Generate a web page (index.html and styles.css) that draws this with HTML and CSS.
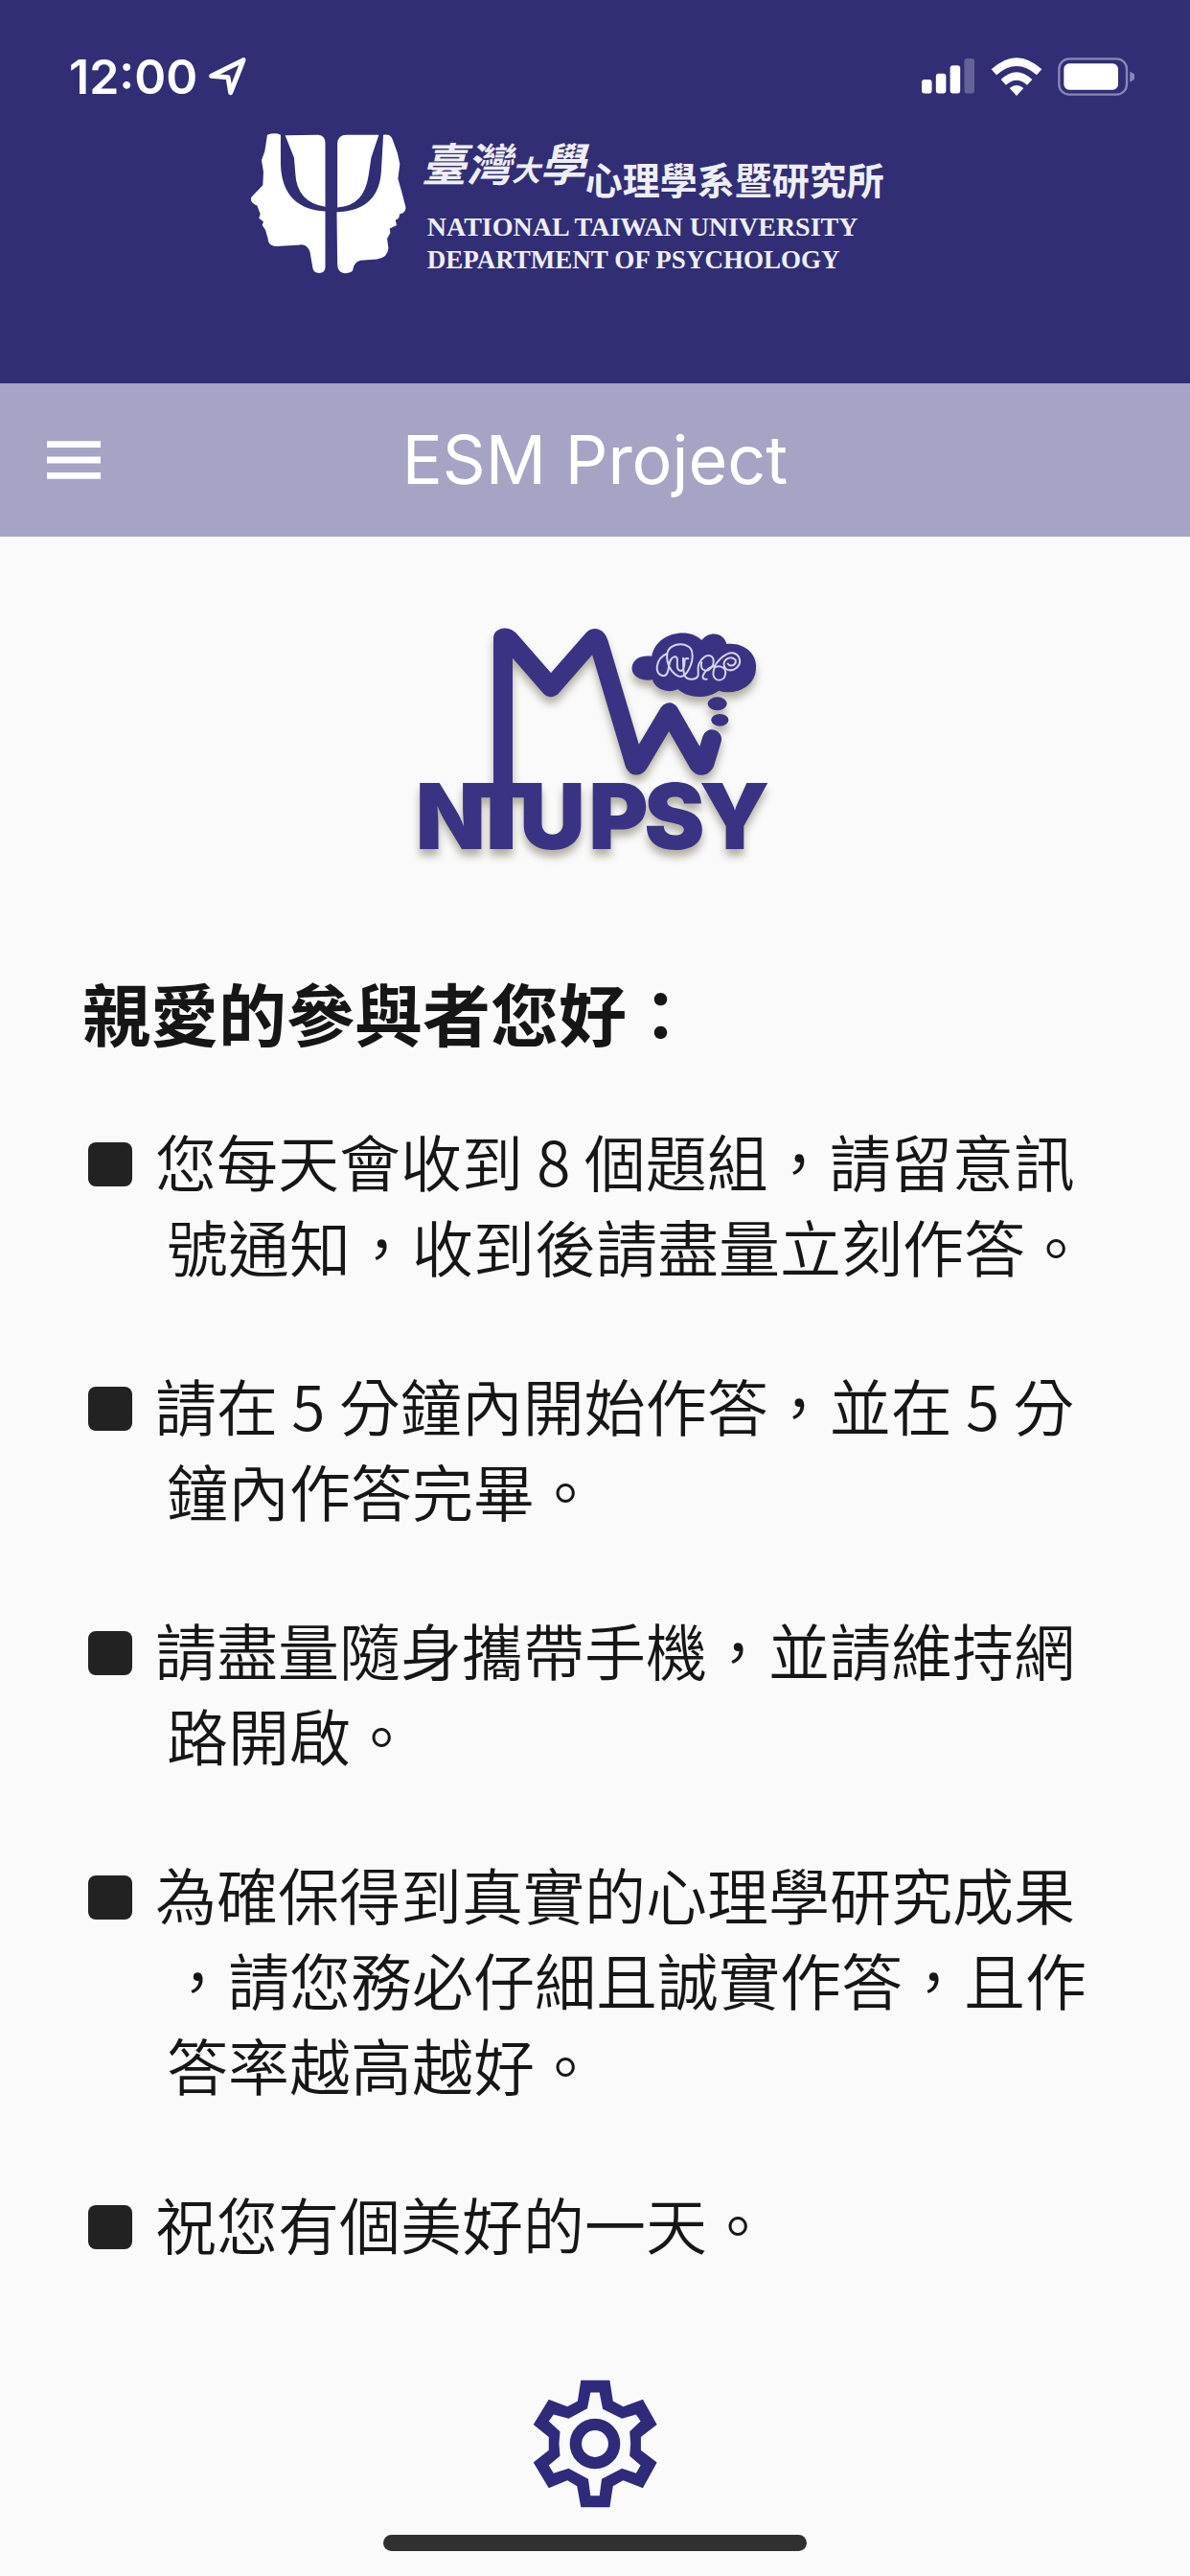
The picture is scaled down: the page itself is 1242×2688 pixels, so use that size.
FILE: index.html
```html
<!DOCTYPE html>
<html lang="zh-Hant">
<head>
<meta charset="utf-8">
<meta name="viewport" content="width=device-width, initial-scale=1">
<title>ESM Project</title>
<link rel="stylesheet" href="styles.css">
</head>
<body>
<header class="header">
  <div class="status">
    <div class="status-left">
      <time class="clock">12:00</time>
      <svg class="locator" viewBox="0 0 120 120" aria-hidden="true"><path d="M8 58 L108 8 L68 110 L60 62 Z"/></svg>
    </div>
    <div class="status-right">
      <svg class="signal" viewBox="0 0 170 120" aria-hidden="true">
        <rect x="0" y="69" width="32" height="44" rx="9"/><rect x="45" y="50" width="32" height="63" rx="9"/>
        <rect x="90" y="24" width="32" height="89" rx="9"/><rect class="faint" x="135" y="2" width="32" height="111" rx="9"/>
      </svg>
      <svg class="wifi" viewBox="0 0 160 120" aria-hidden="true">
        <path d="M1 37 Q80 -36 159 37 L143 55 Q80 -1 17 55 Z"/><path d="M31 69 Q80 22 129 69 L113 86 Q80 56 47 86 Z"/><path d="M58 96 Q80 78 102 96 L80 120 Z"/>
      </svg>
      <svg class="battery" viewBox="0 0 240 120" aria-hidden="true">
        <rect class="shell" x="4" y="4" width="212" height="112" rx="32"/><rect x="19" y="19" width="170" height="82" rx="17"/><path class="tip" d="M226 44 Q242 50 242 60 Q242 70 226 77 Z"/>
      </svg>
    </div>
  </div>
  <div class="brand">
    <svg class="psi" viewBox="0 0 490 440" aria-hidden="true">
      <path d="M54 4 Q78 -4 96 4 L96 96 Q100 236 236 244 L236 420 Q234 438 217 438 Q200 438 197 424 L188 372 Q178 342 150 350 L82 354 Q56 352 56 330 L48 302 L38 288 L42 276 L28 266 L32 252 L22 226 Q-2 216 4 200 L40 162 L42 120 L36 84 L46 56 Z"/>
      <path d="M110 6 L214 4 Q236 6 236 30 L236 230 Q146 216 142 124 L138 76 Z"/>
      <path d="M274 30 Q276 4 302 4 L404 4 L380 76 L372 130 Q358 228 274 232 Z"/>
      <path d="M418 4 Q440 0 446 16 L462 60 L470 96 L464 142 L476 184 L488 230 Q490 248 470 252 L466 266 L456 272 L460 288 L438 298 L440 312 L430 330 L434 360 Q432 390 398 394 L346 398 Q324 404 322 430 Q314 440 294 438 Q274 434 274 410 L272 246 Q408 242 412 110 Z"/>
    </svg>
    <div class="brand-text">
      <div class="brand-zh"><span class="brand-ntu">臺灣<small>大</small>學</span><span class="brand-dept">心理學系暨研究所</span></div>
      <div class="brand-en brand-en-lead">NATIONAL TAIWAN UNIVERSITY</div>
      <div class="brand-en">DEPARTMENT OF PSYCHOLOGY</div>
    </div>
  </div>
</header>
<nav class="nav">
  <button class="menu" type="button" aria-label="選單"><svg viewBox="0 0 60 42" aria-hidden="true"><path d="M1 4H59M1 21H59M1 38H59"/></svg></button>
  <h1 class="nav-title">ESM Project</h1>
</nav>
<main class="main">
  <svg class="logo" viewBox="0 0 1320 870" role="img" aria-label="MW NTUPSY">
    <path class="stem" d="M372 768V108"/>
    <path class="line" d="M372 500 V108 Q384 104 396 118 L522 262 L650 116 Q664 98 672 124 L784 500 Q790 512 798 498 L892 340 L984 500 Q994 514 1004 498 L1026 424"/>
    <path class="cloud" d="M838 164 C850 92 950 70 994 114 C1020 82 1064 92 1072 126 C1130 120 1168 160 1164 200 C1164 262 1096 288 1048 272 C1010 300 950 296 920 268 C880 284 846 262 840 238 C804 244 772 226 776 198 C780 170 806 160 838 164 Z"/>
    <ellipse class="cloud" cx="1043" cy="313" rx="30" ry="21"/><ellipse class="cloud" cx="1051" cy="364" rx="27" ry="19"/>
    <path class="scribble" d="M886 156 C892 118 960 118 964 152 C970 186 944 238 920 226 C900 216 882 190 886 156 C850 170 842 222 874 226 C900 222 882 174 908 166 C930 162 904 210 930 210 C950 200 930 166 952 172 M936 170 C936 220 936 238 966 236 C1000 230 970 206 990 180 C1010 150 1036 160 1030 190 C1018 222 984 210 994 184 M1010 236 C980 240 1010 196 1034 196 C1056 160 1090 140 1110 166 C1124 196 1090 216 1070 204 C1050 184 1080 156 1100 176 C1104 196 1080 196 1076 188 M1034 200 C1020 240 1050 246 1064 232 C1080 200 1050 190 1034 200"/>
    <text class="wordmark" y="768" x="98 262 424 640 814 986">NTUPSY</text>
  </svg>
  <h2 class="greeting">親愛的參與者您好：</h2>
  <ul class="notes">
    <li>您每天會收到 8 個題組，請留意訊號通知，收到後請盡量立刻作答。</li>
    <li>請在 5 分鐘內開始作答，並在 5 分鐘內作答完畢。</li>
    <li>請盡量隨身攜帶手機，並請維持網路開啟。</li>
    <li>為確保得到真實的心理學研究成果，請您務必仔細且誠實作答，且作答率越高越好。</li>
    <li>祝您有個美好的一天。</li>
  </ul>
</main>
<footer class="footer">
  <button class="settings" type="button" aria-label="設定">
    <svg viewBox="104 98 400 400" aria-hidden="true">
      <path fill-rule="evenodd" d="M260 100H350L360 165L392 182L453 160L497 238L447 277V318L497 356L453 436L392 412L360 430L350 496H260L248 430L218 412L160 436L112 356L160 318V277L112 238L160 160L218 182L250 165Z M290 138L280 188L222 220L175 207L160 228L195 260L192 298L195 336L160 365L175 390L222 375L283 408L290 460H318L325 408L388 375L432 390L446 365L412 336L415 298L412 260L446 228L432 207L388 220L328 190L318 138Z"/>
      <circle cx="304" cy="298" r="60"/>
    </svg>
  </button>
  <div class="home-bar"></div>
</footer>
</body>
</html>
```
FILE: styles.css
```css
* { box-sizing: border-box; }

body {
  margin: 0;
  min-height: 100vh;
  display: flex;
  flex-direction: column;
  background: #fafafa;
  color: #161616;
  font-family: "Noto Sans CJK TC", sans-serif;
}

button {
  padding: 0;
  border: 0;
  background: none;
  display: block;
}

svg { display: block; }

/* Header */
.header {
  background: #322e75;
  color: #fff;
  padding-bottom: 108px;
}

.status {
  display: flex;
  justify-content: space-between;
  padding: 50px 58px 22px 72px;
  height: 132px;
}

.status-left, .status-right {
  display: flex;
  align-items: center;
}

.status-left { gap: 12px; }
.status-right { gap: 16px; fill: #fff; }

.clock {
  font: 600 50px/60px Inter, sans-serif;
}

.locator {
  width: 40px;
  height: 40px;
  fill: none;
  stroke: #fff;
  stroke-width: 15;
  stroke-linejoin: round;
}

.signal { width: 56px; height: 40px; }
.wifi { width: 54px; height: 40px; }
.battery { width: 80px; height: 40px; }
.faint { opacity: .25; }
.shell { fill: none; stroke: #8a87b8; stroke-width: 7; }
.tip { fill: #8a87b8; }

.brand {
  display: flex;
  gap: 16px;
  padding: 0 21%;
  height: 160px;
}

.psi {
  width: 163px;
  height: 147px;
  margin-top: 7px;
  flex: none;
  fill: #fff;
}

.brand-text {
  white-space: nowrap;
  color: #eeeef4;
}

.brand-zh {
  display: flex;
  align-items: flex-end;
  height: 88px;
  font-weight: 700;
}

.brand-ntu {
  font-size: 47px;
  line-height: 88px;
  font-style: italic;
}

.brand-ntu small { font-size: 30px; }

.brand-dept {
  font-size: 39px;
  line-height: 68px;
}

.brand-en {
  padding-left: 6px;
  font: 700 27px/34px "Liberation Serif", serif;
}

.brand-en-lead { font-size: 28px; }

/* Title bar */
.nav {
  display: grid;
  grid-template-columns: 58px 1fr 58px;
  align-items: center;
  padding: 0 48px;
  height: 160px;
  background: #a5a4c4;
  color: #fff;
}

.menu svg {
  width: 58px;
  height: 42px;
  stroke: #fff;
  stroke-width: 7;
}

.nav-title {
  margin: 0;
  text-align: center;
  font: 400 70px/84px Inter, sans-serif;
}

/* Content */
.main {
  flex: 1;
  padding: 70px 86px 0;
}

.logo {
  width: 440px;
  height: 290px;
  margin: 0 auto;
  filter: drop-shadow(0 7px 4px rgba(70, 60, 30, .4));
}

.line, .stem {
  fill: none;
  stroke: #3a3383;
  stroke-width: 60;
  stroke-linejoin: round;
}

.line, .scribble { stroke-linecap: round; }
.cloud, .wordmark { fill: #3a3383; }

.scribble {
  fill: none;
  stroke: #d5d3ec;
  stroke-width: 6;
}

.wordmark {
  font: 900 285px Inter, sans-serif;
}

.greeting {
  margin: 90px 0 66px;
  font-size: 71px;
  line-height: 90px;
  font-weight: 700;
}

.notes {
  display: flex;
  flex-direction: column;
  gap: 77px;
  margin: 0;
  padding: 0;
  list-style: none;
}

.notes li {
  display: block;
  padding-left: 88px;
  text-indent: -82px;
  font-size: 64px;
  line-height: 89px;
  font-weight: 350;
  line-break: anywhere;
}

.notes li::before {
  content: "";
  display: inline-block;
  width: 46px;
  height: 46px;
  margin-right: 24px;
  border-radius: 8px;
  background: #222;
}

/* Footer */
.footer {
  display: flex;
  flex-direction: column;
  align-items: center;
  gap: 28px;
  padding-bottom: 26px;
}

.settings svg {
  width: 134px;
  height: 134px;
  fill: #302a7a;
}

.settings circle {
  fill: none;
  stroke: #302a7a;
  stroke-width: 37;
}

.home-bar {
  width: 442px;
  max-width: 60%;
  height: 17px;
  border-radius: 9px;
  background: #303030;
}
```
